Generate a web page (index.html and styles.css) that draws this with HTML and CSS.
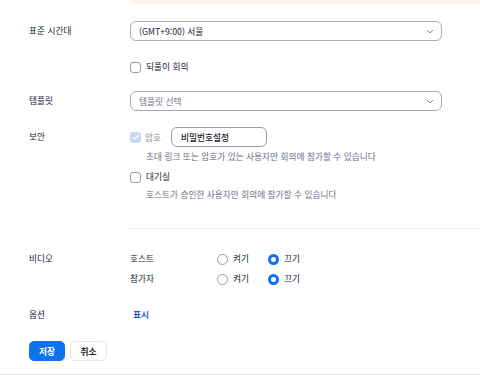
FILE: index.html
```html
<!DOCTYPE html>
<html lang="ko">
<head>
<meta charset="utf-8">
<link rel="stylesheet" href="styles.css">
</head>
<body>
<div class="banner"></div>
<div class="page">
  <div class="row row-tz">
    <div class="label">표준 시간대</div>
    <div class="select"><span>(GMT+9:00) 서울</span><svg class="chev" width="8" height="5" viewBox="0 0 8 5"><path d="M1 1l3 3 3-3" fill="none" stroke="#8a8a99" stroke-width="1"/></svg></div>
  </div>
  <div class="row row-rec">
    <div class="label"></div>
    <label class="check"><span class="box"></span><span>되풀이 회의</span></label>
  </div>
  <div class="row row-tpl">
    <div class="label">템플릿</div>
    <div class="select placeholder"><span>템플릿 선택</span><svg class="chev" width="8" height="5" viewBox="0 0 8 5"><path d="M1 1l3 3 3-3" fill="none" stroke="#8a8a99" stroke-width="1"/></svg></div>
  </div>
  <div class="row row-sec">
    <div class="label">보안</div>
    <div class="sec">
      <div class="pw-line">
        <span class="box checked"><svg width="8" height="6" viewBox="0 0 8 6"><path d="M1 3l2 2 4-4" fill="none" stroke="#fff" stroke-width="1.2"/></svg></span>
        <span class="muted-label">암호</span>
        <div class="input">비밀번호설정</div>
      </div>
      <div class="desc desc1">초대 링크 또는 암호가 있는 사용자만 회의에 참가할 수 있습니다</div>
      <label class="check wait"><span class="box"></span><span>대기실</span></label>
      <div class="desc desc2">호스트가 승인한 사용자만 회의에 참가할 수 있습니다</div>
    </div>
  </div>
  <div class="divider"></div>
  <div class="row row-video">
    <div class="label">비디오</div>
    <div class="video">
      <div class="vrow">
        <span class="sub">호스트</span>
        <span class="radio"></span><span class="rtext">켜기</span>
        <span class="radio on"></span><span class="rtext">끄기</span>
      </div>
      <div class="vrow vrow2">
        <span class="sub">참가자</span>
        <span class="radio"></span><span class="rtext">켜기</span>
        <span class="radio on"></span><span class="rtext">끄기</span>
      </div>
    </div>
  </div>
  <div class="row row-opt">
    <div class="label">옵션</div>
    <div><span class="link">표시</span></div>
  </div>
  <div class="buttons">
    <button class="btn primary">저장</button>
    <button class="btn">취소</button>
  </div>
</div>
<div class="bottom-line"></div>
</body>
</html>
```
FILE: styles.css
```css
* { box-sizing: border-box; }
html, body { margin: 0; padding: 0; background: #fff; }
body {
  font-family: "Noto Sans CJK KR", "Noto Sans", sans-serif;
  font-size: 8.7px;
  color: #232333;
  width: 480px;
  height: 375px;
  overflow: hidden;
}
.banner {
  margin-left: 131px;
  height: 4px;
  background: #fdf6ee;
  border-bottom-left-radius: 5px;
}
.page { padding-left: 29px; }
.row {
  display: grid;
  grid-template-columns: 101px 1fr;
  align-items: center;
  padding-right: 38px;
}
.label { line-height: 12px; }
.row-tz { margin-top: 17px; }
.row-rec { margin-top: 20px; }
.row-tpl { margin-top: 18px; }
.row-sec { margin-top: 16px; align-items: start; }
.row-sec .label { margin-top: 4px; }
.select {
  height: 20px;
  border: 1px solid #a9a9b8;
  border-radius: 6px;
  display: flex;
  align-items: center;
  justify-content: space-between;
  padding: 0 7px 0 8px;
  color: #232333;
}
.select.placeholder { color: #747487; }
.chev { margin-top: 1px; }
.check {
  display: flex;
  align-items: center;
  gap: 5px;
  line-height: 12px;
}
.box {
  width: 11px;
  height: 11px;
  border: 1px solid #9a9aa8;
  border-radius: 3px;
  display: inline-flex;
  align-items: center;
  justify-content: center;
  flex: none;
}
.box.checked {
  background: #c4d9f6;
  border-color: #c4d9f6;
}
.pw-line {
  display: flex;
  align-items: center;
  height: 20px;
}
.muted-label { color: #8a8a99; margin-left: 4px; }
.input {
  margin-left: 10px;
  width: 96px;
  height: 20px;
  border: 1px solid #9a9aa8;
  border-radius: 6px;
  display: flex;
  align-items: center;
  padding-left: 9px;
  font-weight: 500;
  color: #232333;
}
.desc {
  color: #6e6e7e;
  line-height: 12px;
  padding-left: 16px;
}
.desc1 { margin-top: 4px; }
.check.wait { margin-top: 8px; }
.desc2 { margin-top: 6px; }
.divider {
  margin-left: 101px;
  margin-top: 27px;
  height: 1px;
  background: #ededf2;
}
.row-video { margin-top: 24px; align-items: start; }
.vrow {
  display: flex;
  align-items: center;
  line-height: 12px;
}
.vrow2 { margin-top: 8px; }
.sub { width: 87px; }
.radio {
  width: 11px;
  height: 11px;
  border-radius: 50%;
  border: 1px solid #9a9aa8;
  flex: none;
}
.radio.on { border: 3px solid #0e72ed; }
.rtext { margin-left: 5px; width: 35px; }
.row-opt { margin-top: 23px; }
.row-opt .label { line-height: 12px; }
.link {
  display: inline-block;
  line-height: 12px;
  color: #1a64c8;
  font-weight: 700;
  padding-left: 3px;
}
.buttons {
  margin-top: 20px;
  display: flex;
  gap: 5px;
}
.btn {
  font-family: inherit;
  font-size: 8.7px;
  font-weight: 700;
  height: 20px;
  width: 37px;
  border-radius: 5px;
  border: 1px solid #e4e4ea;
  background: #fff;
  color: #232333;
  padding: 0;
}
.btn.primary {
  width: 36px;
  background: #0e72ed;
  border-color: #0e72ed;
  color: #fff;
}
.bottom-line {
  margin-top: 13px;
  height: 1px;
  background: #e4e4ea;
}
```
